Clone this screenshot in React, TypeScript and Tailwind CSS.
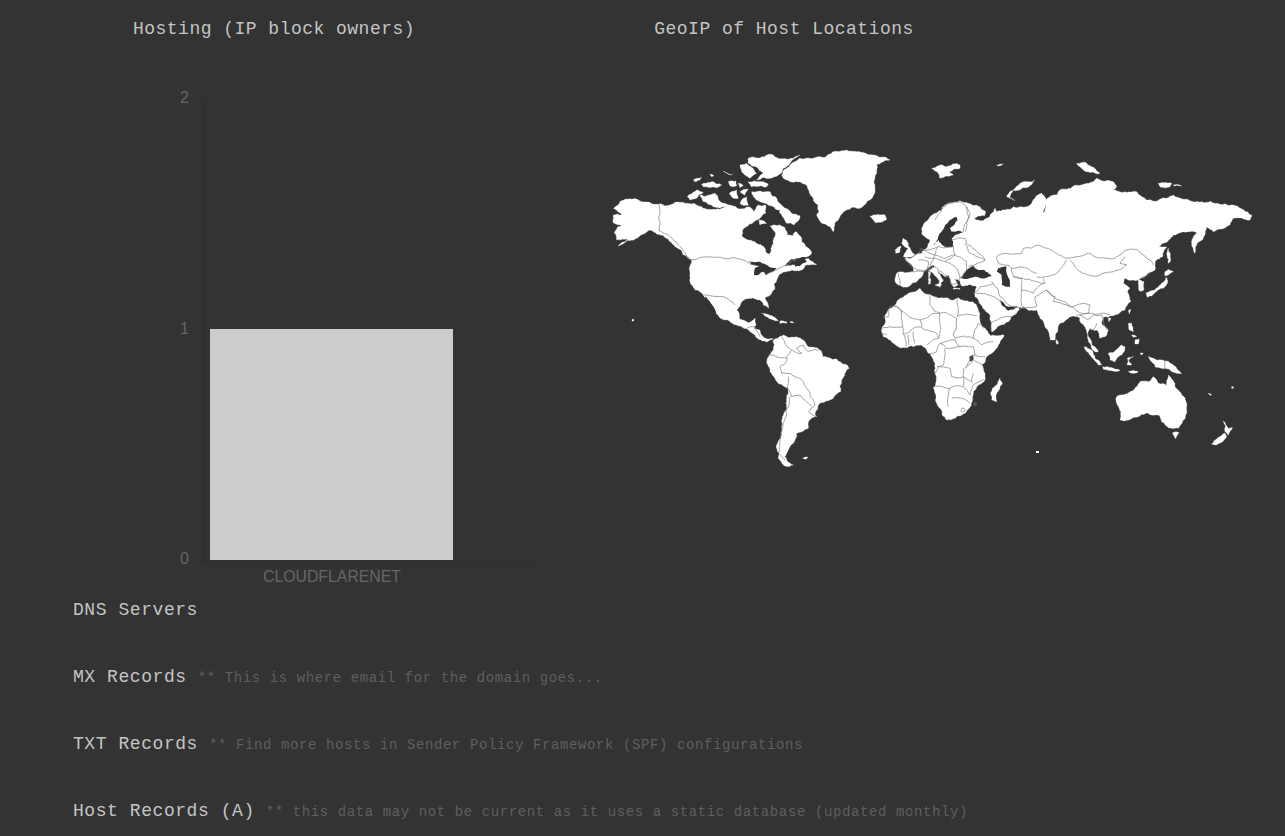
import React from "react";

const BG = "#333333";

// shapes are traced in 3x coordinates, each group has its own origin
const america = {
  land: [
    "40,205 60,185 95,178 125,185 175,193 195,198 245,187 280,190 305,200 320,208 350,207 385,198 420,207 445,200 460,215 475,195 497,195 497,220 480,235 470,240 448,252 428,270 426,288 445,300 470,310 492,320 497,335 508,343 515,320 520,300 527,280 510,258 520,255 555,263 562,285 578,287 588,275 605,305 635,340 622,350 590,355 565,365 555,380 585,375 600,360 625,355 650,373 615,377 605,390 570,393 545,400 530,420 522,432 525,445 515,460 495,475 505,505 490,495 480,480 450,475 425,485 410,510 418,535 445,548 465,535 468,552 462,565 480,570 490,590 520,597 500,606 475,598 450,575 420,558 375,540 345,510 320,478 310,465 285,450 270,415 268,385 275,360 250,345 225,320 205,297 175,283 150,270 128,283 110,295 55,318 85,300 50,300 42,277 68,255 40,248 40,225 65,225",
    "520,600 550,585 590,590 610,600 625,620 660,630 668,650 720,665 748,685 725,720 722,755 700,775 660,790 645,820 650,830 625,845 625,865 590,880 580,910 565,930 555,950 580,975 555,978 535,955 530,925 545,860 558,790 565,745 510,695 500,665 520,630",
    "545,105 600,55 650,52 690,42 770,35 820,45 870,60 830,75 825,110 825,150 810,180 780,205 720,230 700,275 680,255 650,225 655,195 640,175 620,135 600,125 560,120",
    "445,55 510,43 600,45 570,70 550,85 510,115 470,120 490,100 468,80 445,70",
    "280,120 305,112 300,120 285,125",
    "305,133 335,125 365,135 350,143 310,140",
    "385,125 408,123 410,137 390,137",
    "330,103 342,107 335,110",
    "370,93 398,103 385,103",
    "420,75 440,70 470,100 450,115 425,95",
    "445,125 505,133 500,140 455,140",
    "420,155 445,148 435,165",
    "262,170 290,150 310,157 290,175 270,180",
    "300,165 345,160 375,190 395,198 340,200 310,185",
    "388,160 410,150 415,175 395,170",
    "415,130 430,137 420,143",
    "425,180 440,170 445,195 420,190",
    "455,155 510,155 530,175 550,200 575,220 600,227 582,255 560,250 548,230 530,210 495,190 470,180 460,170",
    "478,240 500,250 480,255",
    "810,228 855,225 860,238 825,247",
    "485,520 520,530 535,542 500,530",
    "540,543 560,545 560,550 540,550",
    "570,545 582,548 572,548",
    "608,955 624,952 618,958",
    "96,538 101,538 101,543 96,543",
  ],
  water: [
    "445,362 480,365 510,382 530,385 500,405 490,395 475,405 462,405 465,385 478,378 455,375",
    "585,360 612,350 620,365 600,378 585,380",
    "520,210 540,210 535,227 520,220",
    "315,470 320,472 347,520 342,520",
  ],
  borders: [
    "177,192 177,272 205,285 235,315 270,358",
    "270,358 425,358 445,368 465,375",
    "495,405 530,390 560,375 590,360",
    "310,465 345,470 370,470 405,495",
    "440,565 465,560 480,590",
    "545,590 555,610 575,630 605,640 590,625 610,615 625,635 655,630",
    "575,630 560,650 560,665 540,680 545,700 570,700 585,710 610,725 625,750 640,780 645,795 625,815",
    "505,645 530,650 560,655",
    "565,710 562,745 575,770",
    "575,770 600,765 625,790 635,800",
    "570,770 550,850 540,900 535,940 555,960",
    "625,815 650,830",
  ],
};

const eurasia = {
  land: [
    "50,370 60,365 90,367 100,365 95,345 75,325 100,320 125,310 140,295 150,270 140,265 125,250 130,225 165,190 195,165 240,152 265,160 300,170 317,185 313,198 283,205 300,212 335,190 345,175 350,185 400,170 450,165 465,145 485,130 498,145 490,190 498,150 530,135 540,120 620,100 650,85 700,95 710,110 700,120 770,125 800,150 880,135 940,155 1010,160 1060,165 1115,195 1110,210 1060,205 1050,225 1000,245 980,230 975,245 930,245 880,255 835,290 860,292 825,335 825,360 800,375 775,390 760,390 735,385 730,400 750,415 742,425 752,455 735,480 705,495 685,502 670,502 665,520 685,542 675,560 660,565 650,540 630,535 625,560 655,605 645,605 625,575 615,530 598,502 580,498 540,520 525,570 510,570 495,530 480,505 470,480 430,472 415,472 418,480 410,490 385,515 335,545 335,520 315,480 295,450 285,440 290,410 245,408 240,392 222,388 235,405 222,412 212,395 205,375 195,380 160,345 150,350 130,365 110,395 85,410 55,405 45,390",
    "155,55 200,50 240,45 240,55 205,65 220,75 180,85",
    "380,140 420,100 465,90 400,120 390,145 405,152",
    "590,40 620,40 660,70 620,65",
    "835,100 875,100 870,110 840,110",
    "880,105 905,108 885,108",
    "350,45 370,42 355,48",
    "940,260 980,230 975,255 945,310 937,290",
  ],
};

const europe = {
  land: [
    "55,145 70,160 90,195 55,200 70,175 50,160",
    "30,180 48,168 45,185 32,190",
    "148,230 175,270 165,285 155,262 130,240",
    "130,245 135,245 135,262 130,262",
    "130,265 136,265 136,282 130,282",
    "150,285 170,283 165,292",
    "205,295 225,295 225,298 205,298",
  ],
  water: [
    "145,165 165,130 180,105 215,80 218,90 195,115 200,125 240,125 210,135 200,145 205,170 180,170 160,150",
    "340,235 365,230 365,250 375,275 375,290 350,285 350,255 335,245",
    "245,240 265,228 280,240 298,240 320,258 300,265 270,260 228,265",
  ],
  borders: [
    "150,90 170,60 195,40 225,35 245,50 250,85 235,125",
    "245,50 255,70 240,125",
    "200,150 240,145 245,160 270,180 300,210 270,225 250,230",
    "160,170 205,170 210,195 180,205 150,195 160,170",
    "85,200 110,175 150,195 135,240 95,240 60,205",
    "75,245 125,240",
    "40,250 45,285",
    "115,180 160,170",
    "150,205 180,215 210,195 245,215 245,240 225,265 205,285 180,255 150,230",
    "180,215 210,230 225,265",
    "240,160 250,185 300,210",
    "150,230 135,240",
    "120,200 150,205",
    "100,210 130,215 125,240",
  ],
};

const asia = {
  water: ["360,450 378,468 398,470 412,468 402,478 385,482 365,465"],
  borders: [
    "350,320 380,310 425,310 430,295 475,285 505,295 530,310 560,325 590,320 625,310 660,325 705,325 740,300 770,298 810,330 820,345",
    "570,330 585,350 610,370 660,375 700,365 740,345 720,340 735,320",
    "560,330 530,370 500,380 470,380",
    "350,320 355,340 385,345 395,355 420,350 470,370",
    "395,355 400,380 425,385 470,395 495,400 490,385",
    "335,395 360,440 385,465 430,475 425,420 425,385 400,380",
    "425,420 460,430 490,400",
    "430,470 470,470 465,440 500,420 525,440 520,455 570,470 610,460 630,465 625,490 590,495",
    "500,420 575,470 600,490 630,490 665,490 690,495",
    "600,495 625,510 640,495 665,495 680,540",
    "640,540 650,520",
    "340,400 300,410 285,430",
    "290,430 340,440 365,460",
    "330,520 395,500 410,490",
    "810,370 790,380 775,392",
  ],
};

const africa = {
  land: [
    "5,135 15,100 45,60 85,25 120,10 140,28 185,38 235,38 278,50 300,105 325,145 332,153 372,150 350,190 320,215 305,240 315,270 312,290 280,320 278,345 262,375 225,400 200,405 180,370 160,310 165,265 165,235 145,205 125,180 100,185 55,185 30,165 10,155",
    "360,280 367,295 350,350 335,345 332,325 350,300",
  ],
  water: ["268,215 280,210 280,225 270,230"],
  borders: [
    "45,60 50,65 120,105 125,125",
    "8,95 25,95 30,65 50,65",
    "50,65 65,75 68,125 30,125 5,130",
    "120,105 160,85 180,85 182,130 175,160",
    "150,30 150,60 165,80 230,100",
    "232,40 232,95 290,92",
    "230,100 220,150 225,160 270,155 280,160 295,115 310,130",
    "280,160 305,180 340,170",
    "68,125 70,150 100,130 120,125 170,145 175,160 140,180",
    "100,140 105,175",
    "85,150 85,180",
    "75,150 78,185",
    "145,205 170,200 180,175 225,165 240,185 280,185 285,210 265,230 255,250 280,225 310,240",
    "180,175 200,190 240,185",
    "195,190 190,240 175,245 165,265",
    "170,245 210,250 215,275 250,275 250,305 215,305 210,312 160,305",
    "250,250 250,275 275,290 280,265",
    "285,210 315,215",
    "210,310 205,365",
    "250,305 270,330 280,300 312,285",
    "215,340 245,340 270,355",
    "5,145 20,148",
  ],
};

const pacific = {
  land: [
    "318,160 345,150 365,130 378,112 383,125 370,145 345,158 322,172",
    "375,95 385,88 400,95 385,105 375,108",
    "385,25 392,60 385,70",
    "295,120 312,125 312,150 298,152",
    "265,212 272,208 268,222",
    "205,235 213,235 207,245",
    "265,250 275,250 280,275 268,270",
    "285,300 298,298 295,312 285,312",
    "275,285 290,290 280,292",
    "205,340 245,315 255,320 245,345 225,365 210,360",
    "133,320 155,330 185,375 175,375 150,345",
    "188,380 240,392 235,393 190,388",
    "262,355 280,350 265,360 275,375 262,375",
    "325,350 340,355 365,360 400,375 425,402 395,395 375,385 345,380 335,365",
    "230,470 290,440 300,425 325,425 340,410 355,430 380,438 385,405 405,440 440,490 440,520 415,565 395,565 365,545 355,525 325,520 240,540 243,515 232,495",
    "398,578 417,578 408,596",
    "550,543 565,565 577,562 565,585 555,575",
    "515,612 555,580 560,590 525,615",
    "48,298 56,310 50,313",
    "505,460 515,465 510,466",
    "575,440 580,440 580,445 575,445",
    "265,395 295,395 285,400",
    "300,340 310,340 305,345",
  ],
  borders: ["376,360 376,388"],
};

// breaks long edges up so the traced coast isn't made of straight runs
const rough = (points: string, amount: number, closed: boolean) => {
  let seed = points.length * 7 + 11;
  const next = () => {
    seed = (seed * 9301 + 49297) % 233280;
    return seed / 233280 - 0.5;
  };
  const pts = points.split(" ").map((p) => p.split(",").map(Number));
  if (closed) pts.push(pts[0]);
  const out: number[][] = [];
  const split = (a: number[], b: number[]) => {
    const dx = b[0] - a[0];
    const dy = b[1] - a[1];
    const len = Math.hypot(dx, dy);
    if (len < 7) {
      out.push(a);
      return;
    }
    const d = next() * amount;
    const mid = [(a[0] + b[0]) / 2 - dy * d, (a[1] + b[1]) / 2 + dx * d];
    split(a, mid);
    split(mid, b);
  };
  for (let i = 0; i < pts.length - 1; i++) split(pts[i], pts[i + 1]);
  out.push(pts[pts.length - 1]);
  return out.map((p) => `${p[0].toFixed(1)},${p[1].toFixed(1)}`).join(" ");
};

type MapShapes = { land?: string[]; water?: string[]; borders?: string[] };

const Shapes = ({ x, y, shapes }: { x: number; y: number; shapes: MapShapes }) => (
  <g transform={`translate(${x} ${y}) scale(0.3333)`}>
    {shapes.land?.map((p, i) => (
      <polygon key={i} points={rough(p, 0.3, true)} fill="#fff" stroke="#fff" strokeWidth={1} />
    ))}
    {shapes.water?.map((p, i) => (
      <polygon key={i} points={rough(p, 0.2, true)} fill={BG} />
    ))}
    {shapes.borders?.map((p, i) => (
      <polyline key={i} points={rough(p, 0.2, false)} fill="none" stroke="#808080" strokeWidth={2.2} />
    ))}
  </g>
);

const WorldMap = () => (
  <svg width="660" height="340" viewBox="600 140 660 340" className="block ml-[52px] mt-[100px]">
    <Shapes x={600} y={140} shapes={america} />
    <Shapes x={880} y={150} shapes={eurasia} />
    <Shapes x={880} y={285} shapes={africa} />
    <Shapes x={880} y={150} shapes={asia} />
    <Shapes x={885} y={190} shapes={europe} />
    <Shapes x={1040} y={240} shapes={pacific} />
    <rect x="1036" y="451" width="3" height="2" fill="#fff" />
    <circle cx="963" cy="410" r="2" fill="none" stroke="#808080" strokeWidth={0.7} />
    <circle cx="975" cy="404" r="1.3" fill="none" stroke="#808080" strokeWidth={0.7} />
  </svg>
);

const HostingChart = () => (
  <svg width="548" height="550" viewBox="0 40 548 550" className="block">
    <g stroke="#2e2e2e" strokeWidth={1}>
      <line x1="203.5" y1="97" x2="203.5" y2="562" />
      <line x1="196" y1="97.5" x2="203" y2="97.5" />
      <line x1="196" y1="329.5" x2="203" y2="329.5" />
      <line x1="196" y1="561.5" x2="536" y2="561.5" />
    </g>
    <rect x="210" y="329" width="243" height="231" fill="#cccccc" />
    <g fill="#666666" fontFamily="'Liberation Sans', Arial, sans-serif" fontSize="16">
      <text x="180" y="103">2</text>
      <text x="180" y="334">1</text>
      <text x="180" y="564">0</text>
      <text x="263" y="582" textLength="138" lengthAdjust="spacingAndGlyphs">CLOUDFLARENET</text>
    </g>
  </svg>
);

const rows = [
  { title: "DNS Servers" },
  { title: "MX Records", note: "** This is where email for the domain goes..." },
  { title: "TXT Records", note: "** Find more hosts in Sender Policy Framework (SPF) configurations" },
  { title: "Host Records (A)", note: "** this data may not be current as it uses a static database (updated monthly)" },
];

export default function App() {
  return (
    <div className="w-full h-[836px] overflow-hidden bg-[#333333] font-['Liberation_Mono',monospace] text-[#c4c4c4]">
      <div className="flex h-[576px] items-start">
        <div className="w-[548px] shrink-0">
          <h3 className="h-10 pt-[19px] text-center text-[18px] leading-[21px] tracking-[0.48px]">Hosting (IP block owners)</h3>
          <HostingChart />
        </div>
        <div className="flex-1">
          <h3 className="h-10 w-[472px] pt-[19px] text-center text-[18px] leading-[21px] tracking-[0.48px]">GeoIP of Host Locations</h3>
          <WorldMap />
        </div>
      </div>
      <div className="pl-[73px] pt-[24px]">
        {rows.map((r) => (
          <div key={r.title} className="h-[67px] text-[18px] leading-[21px] tracking-[0.56px] whitespace-nowrap">
            {r.title}
            {r.note && <span className="ml-[11px] text-[14px] tracking-[0.6px] text-[#5f5f5f]">{r.note}</span>}
          </div>
        ))}
      </div>
    </div>
  );
}
